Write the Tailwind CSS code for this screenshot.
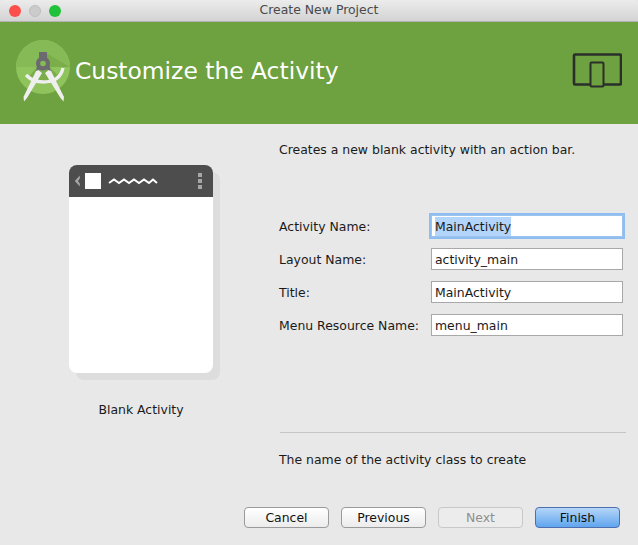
<!DOCTYPE html>
<html lang="en">
<head>
    <meta charset="UTF-8">
    <title>Create New Project</title>
    <script src="https://cdn.jsdelivr.net/npm/@tailwindcss/browser@4"></script>
</head>
<body class="bg-[#e8e8e8] font-['DejaVu_Sans',sans-serif] text-[12.45px] text-[#1a1a1a] w-[638px] h-[545px] overflow-hidden flex flex-col">

    <!-- Titlebar -->
    <div class="relative h-[22px] shrink-0 rounded-t-[5px] border-b border-[#b3b3b3] bg-gradient-to-b from-[#ececec] to-[#d3d3d3] flex items-center justify-center">
        <div class="absolute left-[9px] top-[5px] flex gap-[8px]">
            <span class="w-[12px] h-[12px] rounded-full bg-[#fc4f4b]"></span>
            <span class="w-[12px] h-[12px] rounded-full bg-[#cbcbcb] border border-[#bdbdbd]"></span>
            <span class="w-[12px] h-[12px] rounded-full bg-[#1fc23a]"></span>
        </div>
        <span class="text-[#4a4a4a]">Create New Project</span>
    </div>

    <!-- Green header -->
    <div class="h-[102px] shrink-0 bg-[#6ea13f] flex items-start pl-[16px]">
        <svg class="mt-[18px] shrink-0" width="54" height="62" viewBox="0 0 54 62">
            <circle cx="27" cy="27" r="27" fill="#8fc35c"/>
            <path d="M0 27a27 27 0 0 1 54 0z" fill="#86ba56"/>
            <path d="M30 13 L54 27 L33 27z" fill="#7bae4b"/>
            <path d="M12 38 Q27 50 43 36 L33 27 L21 27z" fill="#7bae4b"/>
            <path d="M21 29 L26 33 L11 58 L8 61.5 L7.5 57z" fill="#efefef"/>
            <path d="M29 33 L34 29 L48 57 L47.5 61.5 L44.5 58z" fill="#efefef"/>
            <path d="M47 28 Q44 42 27 42 Q17 42 10 35" fill="none" stroke="#efefef" stroke-width="3.4"/>
            <rect x="23" y="12" width="8" height="8" fill="#6b6b6f"/>
            <path d="M20 31 L22 21 L32 21 L35 31 L27 28z" fill="#6b6b6f"/>
            <circle cx="27" cy="23.5" r="7" fill="#6b6b6f"/>
            <circle cx="27" cy="23.5" r="2.8" fill="#86ba56"/>
        </svg>
        <h1 class="ml-[5px] mt-[30px] text-[23.4px] leading-[38px] text-white whitespace-nowrap">Customize the Activity</h1>
        <svg class="ml-[233px] mt-[31px] shrink-0" width="50" height="35" viewBox="0 0 50 35" fill="none" stroke="#2b2f2b">
            <rect x="2" y="1.5" width="47" height="30" rx="1" stroke-width="2.6"/>
            <rect x="18.5" y="9.5" width="13" height="24" rx="1" fill="#6ea13f" stroke-width="2"/>
        </svg>
    </div>

    <!-- Main content -->
    <div class="flex flex-1 min-h-0">
        <div class="w-[279px] shrink-0 pl-[69px] pt-[41px]">
            <div class="w-[144px] h-[208px] bg-white rounded-[8px] overflow-hidden shadow-[7px_7px_0_#dddddd]">
                <div class="h-[32px] bg-[#4d4d4d] flex items-center pl-[5px] pr-[11px]">
                    <svg width="6" height="12" viewBox="0 0 6 12"><path d="M5.8 0.5 L0.8 6 L5.8 11.5 L5.8 8.5 L4 6 L5.8 3.5z" fill="#a6a6a6"/></svg>
                    <span class="w-[16px] h-[16px] bg-white ml-[5px]"></span>
                    <svg class="ml-[7px]" width="50" height="8" viewBox="0 0 50 8"><path d="M1 6 L6 2.5 L11 6 L16 2.5 L21 6 L26 2.5 L31 6 L36 2.5 L41 6 L45 2.5 L49 6" fill="none" stroke="#fff" stroke-width="2"/></svg>
                    <span class="ml-auto flex flex-col gap-[2px]">
                        <span class="w-[4px] h-[4px] bg-[#a6a6a6]"></span>
                        <span class="w-[4px] h-[4px] bg-[#a6a6a6]"></span>
                        <span class="w-[4px] h-[4px] bg-[#a6a6a6]"></span>
                    </span>
                </div>
            </div>
            <p class="w-[144px] mt-[29px] text-center leading-[16px]">Blank Activity</p>
        </div>

        <div class="flex-1 flex flex-col pt-[18px] pr-[13px]">
            <p class="leading-[16px]">Creates a new blank activity with an action bar.</p>

            <div class="mt-[57px] flex flex-col gap-[11px] pr-[3px]">
                <div class="flex items-center h-[22px]">
                    <label class="w-[152px] pt-[2px]">Activity Name:</label>
                    <div class="w-[192px] h-[22px] bg-white border border-[#9dc3ee] shadow-[0_0_0_2px_#8ebdf2] flex items-center pl-[3px]"><span class="bg-[#b3d4fb] leading-[19px]">MainActivity</span></div>
                </div>
                <div class="flex items-center h-[22px]">
                    <label class="w-[152px] pt-[2px]">Layout Name:</label>
                    <div class="w-[192px] h-[22px] pt-[2px] bg-white border-[1.5px] border-[#a8a8a8] flex items-center pl-[3px]">activity_main</div>
                </div>
                <div class="flex items-center h-[22px]">
                    <label class="w-[152px] pt-[2px]">Title:</label>
                    <div class="w-[192px] h-[22px] pt-[2px] bg-white border-[1.5px] border-[#a8a8a8] flex items-center pl-[3px]">MainActivity</div>
                </div>
                <div class="flex items-center h-[22px]">
                    <label class="w-[152px] pt-[2px] whitespace-nowrap">Menu Resource Name:</label>
                    <div class="w-[192px] h-[22px] pt-[2px] bg-white border-[1.5px] border-[#a8a8a8] flex items-center pl-[3px]">menu_main</div>
                </div>
            </div>

            <div class="mt-[96px] border-t border-[#c6c6c6] ml-px"></div>
            <p class="mt-[19px] leading-[16px]">The name of the activity class to create</p>
        </div>
    </div>

    <!-- Buttons -->
    <div class="h-[38px] shrink-0 flex items-start gap-[12px] pl-[244px]">
        <button class="w-[85px] h-[21px] pt-px rounded-[4px] border border-[#9a9a9a] bg-gradient-to-b from-white to-[#ececec] text-[#111] leading-none">Cancel</button>
        <button class="w-[85px] h-[21px] pt-px rounded-[4px] border border-[#9a9a9a] bg-gradient-to-b from-white to-[#ececec] text-[#111] leading-none">Previous</button>
        <button class="w-[85px] h-[21px] pt-px rounded-[4px] border border-[#c8c8c8] bg-[#ececec] text-[#8f8f8f] leading-none" disabled>Next</button>
        <button class="w-[85px] h-[21px] pt-px rounded-[4px] border border-[#4d6fb0] bg-gradient-to-b from-[#b5d6f8] to-[#5fa5ee] text-[#111] leading-none">Finish</button>
    </div>
</body>
</html>
